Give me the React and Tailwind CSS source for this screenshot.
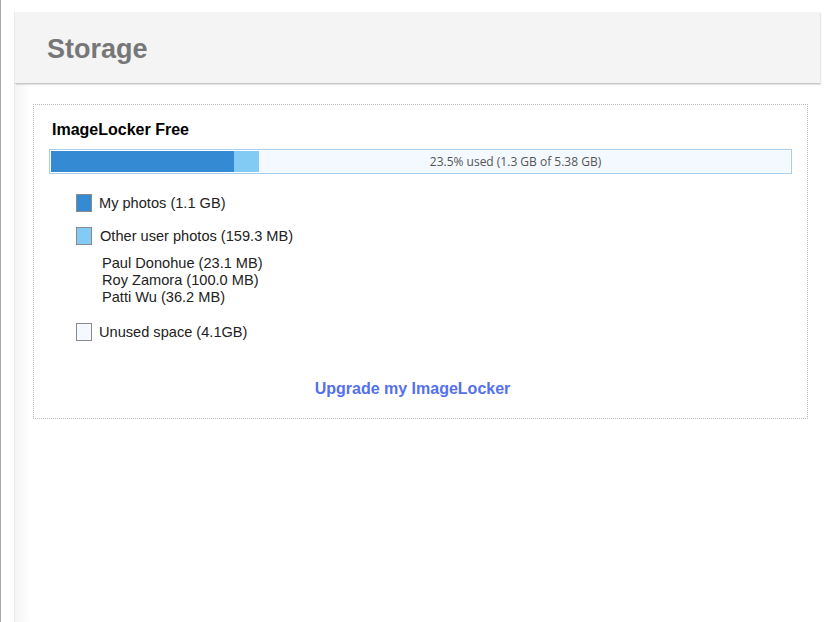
// Storage usage page
const legend = [
  { label: "My photos (1.1 GB)", fill: "bg-[#348bd3]", gap: "ml-[7px]", top: "mt-[20px]" },
  { label: "Other user photos (159.3 MB)", fill: "bg-[#82cbf5]", gap: "ml-[8px]", top: "mt-[15px]" },
]

const others = ["Paul Donohue (23.1 MB)", "Roy Zamora (100.0 MB)", "Patti Wu (36.2 MB)"]

function Swatch({ fill }) {
  return <span className={`block h-[18px] w-[16px] shrink-0 border border-[#8a8a8a] ${fill}`} />
}

export default function App() {
  return (
    <div className="min-h-[622px] border-l border-[#a8a8a8] bg-white pl-[13px] pr-[14px] pt-3 font-['Liberation_Sans',Arial,sans-serif]">
      <div className="min-h-[610px] border-l border-[#e8e8e8] bg-[linear-gradient(90deg,#f5f5f5_0px,#fbfbfb_10px,#ffffff_15px)]">
        <div className="flex h-[72px] items-center border-b border-[#c8c8c8] bg-[#f4f4f4] pl-[32px] pt-[4px] shadow-[1px_1px_1px_rgba(0,0,0,0.1)]">
          <h1 className="text-[27px] font-bold text-[#777777]">Storage</h1>
        </div>

        <div className="ml-[18px] mr-[12px] mt-5 border border-dotted border-[#b8b8b8] bg-white px-[15px] pb-[17px] pt-[16px]">
          <h2 className="pl-[3px] text-[16px] font-bold leading-[18px] text-black">ImageLocker Free</h2>

          <div className="mt-[10px] border border-[#a9cdee] bg-white p-px">
            <div className="flex h-[21px] bg-[#f4f9ff]">
              <div className="w-[183px] bg-[#348bd3]" />
              <div className="w-[25px] bg-[#82cbf5]" />
              <div className="flex flex-1 items-center justify-center pr-[18px] font-['Open_Sans',sans-serif] text-[12px] text-[#555555]">
                23.5% used (1.3 GB of 5.38 GB)
              </div>
            </div>
          </div>

          <div className="ml-[27px] text-[14.6px] leading-[17px] text-[#222222]">
            {legend.map((item) => (
              <div key={item.label} className={`flex items-center ${item.top}`}>
                <Swatch fill={item.fill} />
                <span className={item.gap}>{item.label}</span>
              </div>
            ))}
            <div className="ml-[26px] mt-[10px]">
              {others.map((name) => (
                <div key={name}>{name}</div>
              ))}
            </div>
            <div className="mt-[17px] flex items-center">
              <Swatch fill="bg-[#f4f9ff]" />
              <span className="ml-[7px]">Unused space (4.1GB)</span>
            </div>
          </div>

          <div className="mt-[36px] pr-[16px] text-center">
            <a href="#" className="text-[16px] font-bold leading-[18px] text-[#5470ee]">Upgrade my ImageLocker</a>
          </div>
        </div>
      </div>
    </div>
  )
}
